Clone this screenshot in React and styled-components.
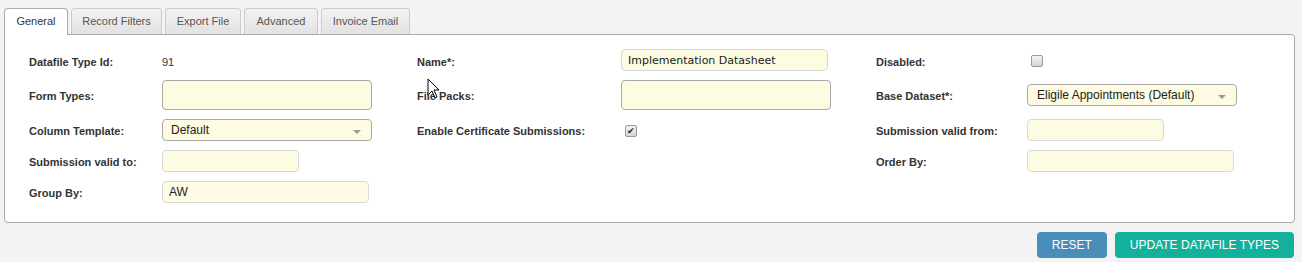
import React from 'react';
import styled, { createGlobalStyle } from 'styled-components';

const GlobalStyle = createGlobalStyle`
    body {
        margin: 0;
        background: #f3f3f3;
        font-family: "Liberation Sans", Arial, sans-serif;
        color: #333;
    }
`;

const Page = styled.div`
    position: relative;
    padding: 8px 7px 0 4px;
`;

const TabBar = styled.div`
    display: flex;
    gap: 3px;
    align-items: flex-end;
`;

const Tab = styled.div`
    box-sizing: border-box;
    width: ${({ w }) => w}px;
    line-height: 25px;
    text-align: center;
    font-size: 11px;
    border: 1px solid ${({ active }) => (active ? '#aaa' : '#ccc')};
    border-bottom: none;
    border-radius: 4px 4px 0 0;
    color: ${({ active }) => (active ? '#333' : '#555')};
    background: ${({ active }) => (active ? '#fff' : 'linear-gradient(#f2f2f2, #e2e2e2)')};
    position: relative;
    z-index: 1;
    margin-bottom: ${({ active }) => (active ? '-1px' : '0')};
    height: ${({ active }) => (active ? '27px' : '26px')};
`;

const Panel = styled.div`
    background: #fff;
    border: 1px solid #aaa;
    border-radius: 0 4px 4px 4px;
    padding: 14px 24px 19px 24px;
`;

const FormGrid = styled.div`
    display: grid;
    grid-template-columns: 133px 255px 204px 255px 151px 1fr;
    grid-template-rows: 22px 30px 22px 22px 22px;
    row-gap: 9px;
    align-items: center;
`;

const Label = styled.div`
    padding-top: ${({ first }) => (first ? 3 : 2)}px;
    font-size: 11px;
    font-weight: bold;
    color: #333;
`;

const Value = styled.div`
    padding-top: 3px;
    font-size: 11px;
    color: #333;
`;

const TextInput = styled.input`
    box-sizing: border-box;
    width: ${({ w }) => w || 207}px;
    height: ${({ h }) => h || 22}px;
    margin: 0;
    padding: 0 6px;
    border: 1px solid ${({ dark }) => (dark ? '#a9a9a9' : '#d9d9d9')};
    border-radius: 4px;
    background: #fdfbe1;
    font-family: ${({ alt }) => (alt ? '"DejaVu Sans", Verdana, sans-serif' : '"Liberation Sans", Arial, sans-serif')};
    font-size: ${({ alt }) => (alt ? 11 : 12)}px;
    color: #222;
    outline: none;
`;

const SelectBox = styled.div`
    box-sizing: border-box;
    width: 210px;
    height: 22px;
    display: flex;
    align-items: center;
    justify-content: space-between;
    padding: 0 10px 0 ${({ pl }) => pl || 8}px;
    border: 1px solid #a9a9a9;
    border-radius: 4px;
    background: #fdfbe1;
    font-size: 12px;
    color: #222;
`;

const Caret = styled.span`
    width: 0;
    height: 0;
    margin-top: 3px;
    border-left: 4px solid transparent;
    border-right: 4px solid transparent;
    border-top: 4px solid #999;
`;

const Check = styled.span`
    box-sizing: border-box;
    width: 12px;
    height: 12px;
    margin: ${({ low }) => (low ? '2px' : '0')} 0 0 4px;
    border: 1px solid #9a9a9a;
    border-radius: 2px;
    background: linear-gradient(#f4f4f4, #d4d4d4);
    display: flex;
    align-items: center;
    justify-content: center;
    font-size: 9px;
    line-height: 1;
    color: #222;
`;

const ButtonRow = styled.div`
    display: flex;
    justify-content: flex-end;
    gap: 8px;
    margin: 9px 1px 0 0;
`;

const Button = styled.button`
    height: 26px;
    padding: 0 15px;
    border: none;
    border-radius: 4px;
    background: ${({ variant }) => (variant === 'primary' ? '#13b09b' : '#4a8db9')};
    color: #fff;
    font-family: "Liberation Sans", Arial, sans-serif;
    font-size: 12px;
`;

const Cursor = styled.svg`
    position: absolute;
    left: 427px;
    top: 78px;
`;

const Empty = styled.span``;

const tabs = [
    { name: 'General', w: 64 },
    { name: 'Record Filters', w: 91 },
    { name: 'Export File', w: 76 },
    { name: 'Advanced', w: 74 },
    { name: 'Invoice Email', w: 89 },
];

const Select = ({ children, pl }) => (
    <SelectBox pl={pl}>
        <span>{children}</span>
        <Caret />
    </SelectBox>
);

export default function App() {
    return (
        <Page>
            <GlobalStyle />
            <TabBar>
                {tabs.map((t, i) => (
                    <Tab key={t.name} w={t.w} active={i === 0}>{t.name}</Tab>
                ))}
            </TabBar>
            <Panel>
                <FormGrid>
                    <Label first>Datafile Type Id:</Label>
                    <Value>91</Value>
                    <Label first>Name*:</Label>
                    <TextInput alt defaultValue="Implementation Datasheet" />
                    <Label first>Disabled:</Label>
                    <Check low />

                    <Label>Form Types:</Label>
                    <TextInput dark w={210} h={30} />
                    <Label>File Packs:</Label>
                    <TextInput dark w={210} h={30} />
                    <Label>Base Dataset*:</Label>
                    <Select pl={9}>Eligile Appointments (Default)</Select>

                    <Label>Column Template:</Label>
                    <Select>Default</Select>
                    <Label>Enable Certificate Submissions:</Label>
                    <Check low>✔</Check>
                    <Label>Submission valid from:</Label>
                    <TextInput w={137} />

                    <Label>Submission valid to:</Label>
                    <TextInput w={137} />
                    <Empty />
                    <Empty />
                    <Label>Order By:</Label>
                    <TextInput />

                    <Label>Group By:</Label>
                    <TextInput defaultValue="AW" />
                </FormGrid>
            </Panel>
            <ButtonRow>
                <Button>RESET</Button>
                <Button variant="primary">UPDATE DATAFILE TYPES</Button>
            </ButtonRow>
            <Cursor width="14" height="22" viewBox="0 0 14 22">
                <path d="M1 1 L1 17 L5 13 L8 20 L10 19 L7 12 L12 12 Z" fill="#fff" stroke="#000" strokeWidth="1" strokeLinejoin="round" />
            </Cursor>
        </Page>
    );
}
